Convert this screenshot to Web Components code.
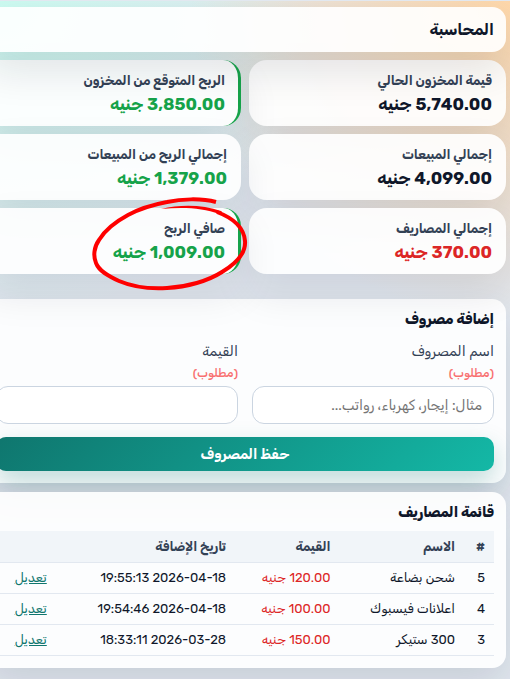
<!DOCTYPE html>
<html lang="ar" dir="rtl">
<head>
<meta charset="UTF-8">
<meta name="viewport" content="width=device-width, initial-scale=1">
<title>المحاسبة</title>
<style>
  * {
    box-sizing: border-box;
  }
  html {
    min-height: 100%;
    overflow: hidden;
    background: #dfe4ed;
  }
  body {
    margin: 0;
    min-height: 100vh;
    overflow: hidden;
    border-top: 1px solid #e2e8f0;
    color: #0f172a;
    font-family: Rubik, Inter, "DejaVu Sans", sans-serif;
    font-size: 13px;
    background:
      radial-gradient(circle at 100% 0, #fed7aa 0, rgba(254, 215, 170, 0) 320px),
      radial-gradient(circle at 0 0, #ccfbf1 0, rgba(204, 251, 241, 0) 320px),
      #e2e8f0;
  }
</style>
</head>
<body>
<accounting-page></accounting-page>

<script>
class PanelCard extends HTMLElement {

  constructor() {
    super();
    this.shadowDOM = this.attachShadow({mode: 'open'});
  }

  connectedCallback() {
    this.render();
  }

  render() {
    const tag = this.hasAttribute('main') ? 'h1' : 'h2';
    this.shadowDOM.innerHTML = `
      <style>
        :host {
          display: block;
          padding: 9px 12px 12px;
          border-radius: 14px;
          background: rgba(255, 255, 255, 0.9);
          box-shadow: 0 18px 40px rgba(15, 23, 42, 0.12);
        }
        /* the page header stays above the cards, its shadow falls on them */
        :host([main]) {
          position: relative;
          z-index: 1;
          padding: 10px 12px;
        }
        h1, h2 {
          margin: 0;
        }
        h1 {
          font-size: 16px;
          font-weight: 700;
          line-height: 25px;
        }
        h2 {
          font-size: 14px;
          font-weight: 800;
          line-height: 24px;
        }
      </style>
      <${tag}>${this.getAttribute('heading')}</${tag}>
      <slot></slot>
    `;
  }
}

customElements.define('panel-card', PanelCard);

class StatCard extends HTMLElement {

  constructor() {
    super();
    this.shadowDOM = this.attachShadow({mode: 'open'});
  }

  connectedCallback() {
    this.render();
  }

  render() {
    this.shadowDOM.innerHTML = `
      <style>
        * {
          box-sizing: border-box;
        }
        :host {
          display: block;
          position: relative;
        }
        .card {
          padding: 9px 14px 11px;
          border-radius: 18px;
          background: rgba(255, 255, 255, 0.9);
          box-shadow: 0 18px 40px rgba(15, 23, 42, 0.1);
        }
        :host([accent]) .card {
          padding-right: 13px;
          border-right: 3px solid #16a34a;
        }
        p {
          margin: 0;
        }
        .label {
          color: #334155;
          font-size: 13px;
          font-weight: 700;
          line-height: 24px;
        }
        .value {
          color: #0f172a;
          font-size: 17px;
          font-weight: 700;
          line-height: 22px;
        }
        :host([tone="profit"]) .value {
          color: #16a34a;
        }
        :host([tone="loss"]) .value {
          color: #dc2626;
        }
      </style>
      <div class="card">
        <p class="label">${this.getAttribute('label')}</p>
        <p class="value">${this.getAttribute('value')} جنيه</p>
      </div>
      <slot></slot>
    `;
  }
}

customElements.define('stat-card', StatCard);

// hand drawn circle that lies over a stat card
class MarkerCircle extends HTMLElement {

  constructor() {
    super();
    this.shadowDOM = this.attachShadow({mode: 'open'});
  }

  connectedCallback() {
    this.shadowDOM.innerHTML = `
      <style>
        :host {
          display: block;
          position: absolute;
          top: -13px;
          right: -9px;
          z-index: 2;
          width: 160px;
          height: 98px;
          pointer-events: none;
        }
        svg {
          display: block;
        }
      </style>
      <svg width="160" height="98" viewBox="0 0 160 98" fill="none" stroke="#fe0000" stroke-linejoin="round" aria-hidden="true">
        <path stroke-width="4" d="M126 7C111 3 91 4 77 7C61 10 49 14 38 20C25 27 15 35 9 45C4 52 3 61 6 68C9 76 18 81 29 86C43 92 60 94 77 93C97 92 118 86 132 77C147 68 156 58 155 46C154 33 143 23 127 17"/>
        <path d="M129 19C113 13 94 12 71 14C92 9 113 10 131 16C133 17 132 20 129 19Z" fill="#fe0000" stroke="none"/>
      </svg>
    `;
  }
}

customElements.define('marker-circle', MarkerCircle);

class FormField extends HTMLElement {

  constructor() {
    super();
    this.shadowDOM = this.attachShadow({mode: 'open'});
  }

  connectedCallback() {
    this.render();
  }

  render() {
    this.shadowDOM.innerHTML = `
      <style>
        * {
          box-sizing: border-box;
        }
        :host {
          display: block;
          min-width: 0;
        }
        label {
          display: block;
          color: #334155;
          font-size: 14px;
          line-height: 24px;
        }
        small {
          display: block;
          color: #f87171;
          font-size: 12px;
          font-weight: 500;
          line-height: 18px;
        }
        input {
          display: block;
          width: 100%;
          height: 38px;
          margin-top: 4px;
          padding: 0 11px;
          border: 1px solid #cbd5e1;
          border-radius: 12px;
          background: #fff;
          color: #0f172a;
          font-family: inherit;
          font-size: 14px;
        }
        input::placeholder {
          color: #757575;
        }
      </style>
      <label for="field">${this.getAttribute('label')} <small>(مطلوب)</small></label>
      <input id="field" type="text" placeholder="${this.getAttribute('placeholder') || ''}" required>
    `;
  }
}

customElements.define('form-field', FormField);

class ExpenseForm extends HTMLElement {

  constructor() {
    super();
    this.shadowDOM = this.attachShadow({mode: 'open'});
  }

  connectedCallback() {
    this.shadowDOM.innerHTML = `
      <style>
        :host {
          display: block;
        }
        form {
          margin: 8px 0 0;
        }
        .fields {
          display: grid;
          grid-template-columns: 1fr 1fr;
          gap: 14px;
        }
        button {
          display: block;
          width: 100%;
          height: 34px;
          margin-top: 13px;
          padding: 0;
          border: 0;
          border-radius: 10px;
          background: linear-gradient(315deg, #14b8a6, #0f766e);
          box-shadow: 0 10px 24px rgba(15, 118, 110, 0.25);
          color: #fff;
          font-family: inherit;
          font-size: 14px;
          font-weight: 700;
        }
      </style>
      <form>
        <div class="fields">
          <form-field label="اسم المصروف" placeholder="مثال: إيجار، كهرباء، رواتب..."></form-field>
          <form-field label="القيمة"></form-field>
        </div>
        <button type="button">حفظ المصروف</button>
      </form>
    `;
  }
}

customElements.define('expense-form', ExpenseForm);

class ExpenseTable extends HTMLElement {

  constructor() {
    super();
    this.shadowDOM = this.attachShadow({mode: 'open'});
  }

  set expenses(expenses) {
    this._expenses = expenses;
    this.render();
  }

  render() {
    this.shadowDOM.innerHTML = `
      <style>
        :host {
          display: block;
          margin-top: 6px;
        }
        table {
          width: 100%;
          table-layout: fixed;
          border-collapse: collapse;
          font-size: 13px;
        }
        th, td {
          box-sizing: border-box;
          height: 31px;
          padding: 0 9px;
          border-bottom: 1px solid #e2e8f0;
          text-align: right;
          white-space: nowrap;
        }
        th {
          background: #f1f5f9;
          color: #334155;
          font-weight: 700;
        }
        .num { width: 6%; }
        .name { width: 25%; }
        .amount { width: 21%; }
        .date { width: 36%; }
        td.amount {
          color: #dc2626;
        }
        a {
          color: #0f766e;
        }
      </style>
      <table>
        <thead>
          <tr>
            <th class="num">#</th>
            <th class="name">الاسم</th>
            <th class="amount">القيمة</th>
            <th class="date">تاريخ الإضافة</th>
            <th></th>
          </tr>
        </thead>
        <tbody>
          ${this._expenses.map(expense => `
            <tr>
              <td>${expense.id}</td>
              <td>${expense.name}</td>
              <td class="amount">${expense.amount} جنيه</td>
              <td>${expense.date}</td>
              <td><a href="#edit-${expense.id}">تعديل</a></td>
            </tr>
          `).join('')}
        </tbody>
      </table>
    `;
  }
}

customElements.define('expense-table', ExpenseTable);

class AccountingPage extends HTMLElement {

  constructor() {
    super();
    this.shadowDOM = this.attachShadow({mode: 'open'});
  }

  connectedCallback() {
    this.shadowDOM.innerHTML = `
      <style>
        /* the sheet is a little wider than the window and runs off its left side */
        :host {
          display: block;
          width: calc(100% + 12px);
          margin-right: 4px;
          padding: 6px 0 11px;
        }
        .stats {
          display: grid;
          grid-template-columns: 1fr 1fr;
          gap: 8px;
          margin: 8px 0 25px;
        }
        .list {
          margin-top: 9px;
        }
      </style>
      <panel-card main heading="المحاسبة"></panel-card>
      <div class="stats">
        <stat-card label="قيمة المخزون الحالي" value="5,740.00"></stat-card>
        <stat-card label="الربح المتوقع من المخزون" value="3,850.00" tone="profit" accent></stat-card>
        <stat-card label="إجمالي المبيعات" value="4,099.00"></stat-card>
        <stat-card label="إجمالي الربح من المبيعات" value="1,379.00" tone="profit"></stat-card>
        <stat-card label="إجمالي المصاريف" value="370.00" tone="loss"></stat-card>
        <stat-card label="صافي الربح" value="1,009.00" tone="profit" accent>
          <marker-circle></marker-circle>
        </stat-card>
      </div>
      <panel-card heading="إضافة مصروف">
        <expense-form></expense-form>
      </panel-card>
      <panel-card class="list" heading="قائمة المصاريف">
        <expense-table></expense-table>
      </panel-card>
    `;
    this.shadowDOM.querySelector('expense-table').expenses = [
      {id: 5, name: 'شحن بضاعة', amount: '120.00', date: '2026-04-18 19:55:13'},
      {id: 4, name: 'اعلانات فيسبوك', amount: '100.00', date: '2026-04-18 19:54:46'},
      {id: 3, name: '300 ستيكر', amount: '150.00', date: '2026-03-28 18:33:11'}
    ];
  }
}

customElements.define('accounting-page', AccountingPage);
</script>
</body>
</html>
